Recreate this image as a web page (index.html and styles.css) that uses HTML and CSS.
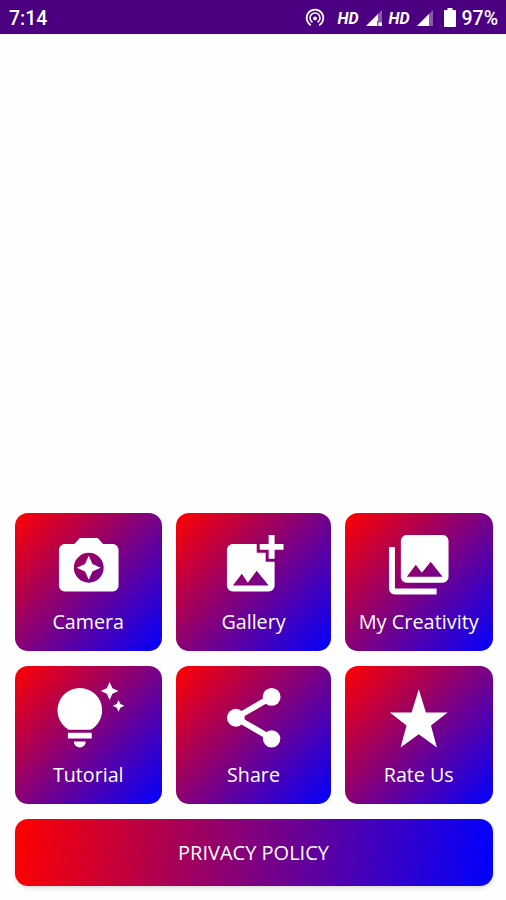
FILE: index.html
```html
<!DOCTYPE html>
<html lang="en">
<head>
<meta charset="utf-8">
<title>Home</title>
<link rel="stylesheet" href="styles.css">
</head>
<body>
<header class="status">
  <span class="time">7:14</span>
  <div class="indicators">
    <svg class="hotspot" viewBox="0 0 24 24"><g fill="none" stroke="currentColor" stroke-width="2"><path d="M7 20.6a10 10 0 1 1 10 0"/><path d="M9 17.2a6 6 0 1 1 6 0"/></g><circle cx="12" cy="12.5" r="2.3"/></svg>
    <span class="hd">HD</span>
    <svg class="signal first" viewBox="0 0 16 16"><path d="M0 16L16 0V16z" opacity=".35"/><path d="M0 16L12 4v7h-1v5zM12.500 12.500h3.500v3.500h-3.500z"/></svg>
    <span class="hd">HD</span>
    <svg class="signal" viewBox="0 0 16 16"><path d="M0 16L16 0V16z" opacity=".35"/><path d="M0 16L12 4V16z"/></svg>
    <svg class="battery" viewBox="0 0 12 19"><path d="M3.500 0h5v2H11a1 1 0 0 1 1 1v15a1 1 0 0 1-1 1H1a1 1 0 0 1-1-1V3a1 1 0 0 1 1-1h2.500z"/></svg>
    <span class="percent">97%</span>
  </div>
</header>
<main class="menu">
  <div class="grid">
    <a class="card"><svg class="icon" viewBox="0 0 24 24"><path fill-rule="evenodd" d="M9 3L7.170 5H4c-1.100 0-2 .9-2 2v12c0 1.100.9 2 2 2h16c1.100 0 2-.9 2-2V7c0-1.100-.9-2-2-2h-3.170L15 3zM12 18a5 5 0 1 1 0-10 5 5 0 0 1 0 10z"/><path d="M12 17l1.250-2.750L16 13l-2.750-1.250L12 9l-1.250 2.750L8 13l2.750 1.250z"/></svg><span>Camera</span></a>
    <a class="card"><svg class="icon" viewBox="0 0 24 24"><path d="M19 7v3h-2V7h-3V5h3V2h2v3h3v2zM16 11V8h-3V5H5c-1.100 0-2 .9-2 2v12c0 1.100.9 2 2 2h12c1.100 0 2-.9 2-2v-8zM5 19l3-4 2 3 3-4 4 5z"/></svg><span>Gallery</span></a>
    <a class="card"><svg class="icon" viewBox="0 0 24 24"><path d="M22 16V4c0-1.100-.9-2-2-2H8c-1.100 0-2 .9-2 2v12c0 1.100.9 2 2 2h12c1.100 0 2-.9 2-2zm-11-4l2.030 2.710L16 11l4 5H8zM2 6v14c0 1.100.9 2 2 2h14v-2H4V6z"/></svg><span class="wide">My Creativity</span></a>
    <a class="card"><svg class="icon" viewBox="0 0 24 24"><path d="M7 20h4a2 2 0 0 1-4 0zM5 17h8v2H5zM16.500 9.500c0 3.820-2.660 5.860-3.770 6.500H5.270C4.160 15.360 1.500 13.320 1.500 9.500a7.500 7.500 0 0 1 15 0zM21.370 7.370L20 8l1.370.63L22 10l.63-1.370L24 8l-1.370-.63L22 6zM19 6l.94-2.060L22 3l-2.060-.94L19 0l-.94 2.060L16 3l2.060.94z"/></svg><span>Tutorial</span></a>
    <a class="card"><svg class="icon" viewBox="0 0 24 24"><path d="M18 5L6 12l12 7" fill="none" stroke="currentColor" stroke-width="2"/><circle cx="18" cy="5" r="3"/><circle cx="6" cy="12" r="3"/><circle cx="18" cy="19.080" r="2.920"/></svg><span>Share</span></a>
    <a class="card"><svg class="icon" viewBox="0 0 24 24"><path d="M12 2.400L14.400 10.200H21.700L16.100 14.600L18.100 22L12 17.500L5.900 22L7.900 14.600L2.300 10.200H9.600z"/></svg><span>Rate Us</span></a>
  </div>
  <a class="privacy">PRIVACY POLICY</a>
</main>
</body>
</html>
```
FILE: styles.css
```css
* { box-sizing: border-box; }
body {
  margin: 0;
  height: 900px;
  display: flex;
  flex-direction: column;
  background: #fefefe;
  color: #fff;
  font-family: "Open Sans", "Noto Sans", sans-serif;
  overflow: hidden;
}
svg { display: block; fill: currentColor; flex: none; }
.status {
  height: 34px;
  padding: 2px 8px 0 9px;
  display: flex;
  align-items: center;
  justify-content: space-between;
  background: #4b0082;
  font: 500 19.500px Roboto, sans-serif;
}
.indicators { display: flex; align-items: center; }
.hotspot { width: 20px; height: 20px; margin-right: 12px; }
.hd { font-size: 16px; font-style: italic; font-weight: 700; width: 22px; }
.signal { width: 16px; height: 16px; margin: 0 11px 0 7px; }
.signal.first { margin: 0 6px 0 7px; }
.battery { width: 12px; height: 19px; margin: 0 5px 1px 0; }
.menu {
  margin-top: auto;
  padding: 0 13.500px 14px 14.500px;
  display: flex;
  flex-direction: column;
  gap: 15px;
}
.grid {
  display: grid;
  grid-template-columns: 147.500px 154.500px 147.500px;
  grid-auto-rows: 138.100px;
  justify-content: space-between;
  row-gap: 15px;
}
.card {
  display: flex;
  flex-direction: column;
  align-items: center;
  padding-top: 16px;
  border-radius: 13px;
  background: linear-gradient(133deg, #f00, #00f);
  font-size: 19.700px;
  line-height: 28px;
  white-space: nowrap;
}
.wide { font-size: 19.900px; }
.icon { width: 71.500px; height: 71.500px; margin-bottom: 7px; }
.privacy {
  height: 66.800px;
  display: flex;
  align-items: center;
  justify-content: center;
  border-radius: 13px;
  background: linear-gradient(98deg, #f00, #00f);
  box-shadow: 0 2px 4px rgba(0, 0, 0, .14);
  font-size: 20px;
}
```
